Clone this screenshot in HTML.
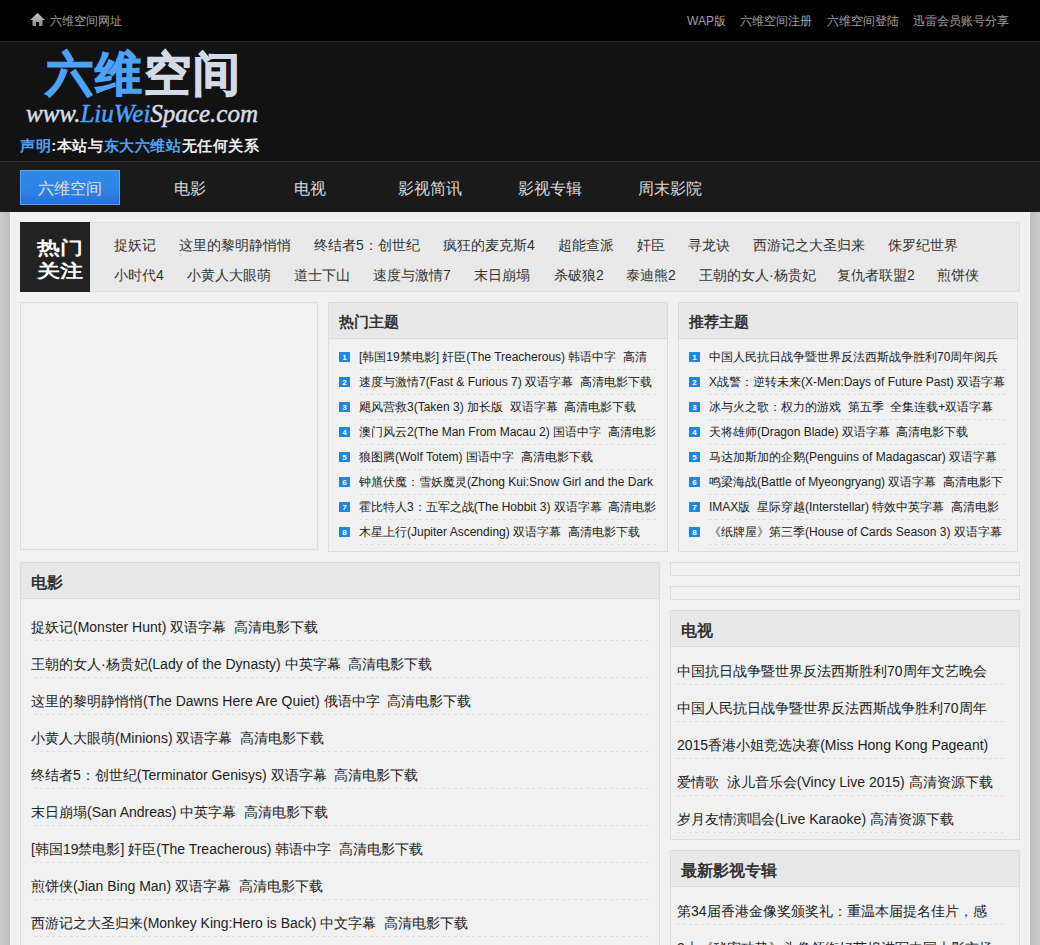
<!DOCTYPE html>
<html><head><meta charset="utf-8">
<style>
*{margin:0;padding:0;box-sizing:border-box}
html,body{width:1040px;height:945px;overflow:hidden}
body{background:linear-gradient(90deg,#cdcdcd 0,#bdbdbd 10px,#bdbdbd 1030px,#cdcdcd 1040px);font-family:"Liberation Sans",sans-serif;color:#333;position:relative}
.abs{position:absolute}
#top{left:0;top:0;width:1040px;height:42px;background:#000;border-bottom:1px solid #2a2a2a}
#top .home{left:30px;top:13px;width:15px;height:14px}
#top .t{font-size:12px;color:#a0a0a0;top:14px;line-height:14px;white-space:nowrap}
#head{left:0;top:42px;width:1040px;height:120px;background:#121212;border-bottom:1px solid #2c2c2c}
#nav{left:0;top:162px;width:1040px;height:50px;background:#1a1a1a}
#nav .it{top:8px;width:100px;height:35px;line-height:37px;text-align:center;font-size:16px;color:#dcdcdc}
#nav .on{background:linear-gradient(#2f88e8,#2d84e6 55%,#2870da);border:1px solid #55a8f8;color:#e0e0e0;line-height:35px}
#main{left:10px;top:212px;width:1020px;height:733px;background:#f1f1f1;border-left:1px solid #f5f5f5;border-right:1px solid #f5f5f5}
#hot{left:20px;top:222px;width:1000px;height:70px;background:#e9e9e9;border:1px solid #dfdfdf}
#hotlbl{left:20px;top:222px;width:70px;height:70px;background:#222}
.hl{color:#fff;font-weight:bold;font-size:20px;line-height:22px;white-space:nowrap;transform:scale(1.13,0.88);transform-origin:0 0}
.tag{font-size:14px;color:#333;white-space:nowrap;line-height:16px}
.pnl{border:1px solid #dcdcdc;background:#f1f1f1}
.ph{position:absolute;left:0;top:0;right:0;height:36px;background:#e8e8e8;border-bottom:1px solid #dcdcdc;font-weight:bold;color:#333}
.ph span{position:absolute;white-space:nowrap}
.sl{position:absolute;overflow:hidden;white-space:nowrap;font-size:12px;color:#222;height:25px;line-height:24px;
 background:repeating-linear-gradient(90deg,#ddd 0 3px,transparent 3px 6px) left bottom/100% 1px no-repeat}
.num{position:absolute;width:11px;height:10px;background:#1d88e2;color:#fff;font-size:8px;font-weight:bold;line-height:12px;text-align:center;overflow:hidden}
.bl{position:absolute;overflow:hidden;white-space:nowrap;font-size:14px;color:#222;height:37px;line-height:46px;
 background:repeating-linear-gradient(90deg,#ddd 0 3px,transparent 3px 6px) left bottom/100% 1px no-repeat}
.logo{font-family:"Liberation Serif",serif;white-space:nowrap}
</style></head><body>
<div id="top" class="abs">
<svg class="abs home" viewBox="0 0 15 14"><defs><linearGradient id="hg" x1="0" y1="0" x2="0" y2="1"><stop offset="0" stop-color="#c8c8c8"/><stop offset="1" stop-color="#8a8a8a"/></linearGradient></defs><path d="M7.5 0 L15 7 L12.5 7 L12.5 13 L9 13 L9 9 L6 9 L6 13 L2.5 13 L2.5 7 L0 7 Z" fill="url(#hg)"/></svg>
<div class="abs t" style="left:50px">六维空间网址</div>
<div class="abs t" style="left:687px">WAP版</div>
<div class="abs t" style="left:740px">六维空间注册</div>
<div class="abs t" style="left:827px">六维空间登陆</div>
<div class="abs t" style="left:913px">迅雷会员账号分享</div>
</div>
<div id="head" class="abs"></div>
<div id="nav" class="abs">
<div class="abs it on" style="left:20px">六维空间</div>
<div class="abs it" style="left:140px">电影</div>
<div class="abs it" style="left:260px">电视</div>
<div class="abs it" style="left:380px">影视简讯</div>
<div class="abs it" style="left:500px">影视专辑</div>
<div class="abs it" style="left:620px">周末影院</div>
</div>
<div class="abs logo" style="left:46px;top:46px;font-weight:bold;font-size:47px;letter-spacing:2px;line-height:56px;-webkit-text-stroke:1.2px currentColor"><span style="color:#4ca2fb">六维</span><span style="color:#d3dbe8">空间</span></div>
<div class="abs logo" style="left:26px;top:101px;font-style:italic;font-size:25px;line-height:26px;color:#d8dde6;-webkit-text-stroke:0.5px currentColor">www.<span style="color:#4ca2fb">LiuWei</span>Space.com</div>
<div class="abs" style="left:20px;top:137px;font-weight:bold;font-size:15px;letter-spacing:0.6px;line-height:18px;color:#eee;white-space:nowrap"><span style="color:#4ca2fb">声明</span>:本站与<span style="color:#4ca2fb">东大六维站</span>无任何关系</div>
<div id="main" class="abs"></div>
<div id="hot" class="abs"></div>
<div id="hotlbl" class="abs"></div>
<div class="abs hl" style="left:37px;top:238px">热门</div>
<div class="abs hl" style="left:37px;top:261px">关注</div>
<div class="abs tag" style="left:114px;top:237px">捉妖记</div>
<div class="abs tag" style="left:179px;top:237px">这里的黎明静悄悄</div>
<div class="abs tag" style="left:314px;top:237px">终结者5：创世纪</div>
<div class="abs tag" style="left:443px;top:237px">疯狂的麦克斯4</div>
<div class="abs tag" style="left:558px;top:237px">超能查派</div>
<div class="abs tag" style="left:637px;top:237px">奸臣</div>
<div class="abs tag" style="left:688px;top:237px">寻龙诀</div>
<div class="abs tag" style="left:753px;top:237px">西游记之大圣归来</div>
<div class="abs tag" style="left:888px;top:237px">侏罗纪世界</div>
<div class="abs tag" style="left:114px;top:267px">小时代4</div>
<div class="abs tag" style="left:187px;top:267px">小黄人大眼萌</div>
<div class="abs tag" style="left:294px;top:267px">道士下山</div>
<div class="abs tag" style="left:373px;top:267px">速度与激情7</div>
<div class="abs tag" style="left:474px;top:267px">末日崩塌</div>
<div class="abs tag" style="left:554px;top:267px">杀破狼2</div>
<div class="abs tag" style="left:626px;top:267px">泰迪熊2</div>
<div class="abs tag" style="left:699px;top:267px">王朝的女人·杨贵妃</div>
<div class="abs tag" style="left:837px;top:267px">复仇者联盟2</div>
<div class="abs tag" style="left:937px;top:267px">煎饼侠</div>
<div class="abs pnl" style="left:20px;top:302px;width:298px;height:248px"></div>
<div class="abs pnl" style="left:328px;top:302px;width:340px;height:250px"><div class="ph" style="font-size:15px"><span style="left:10px;top:10px;line-height:17px">热门主题</span></div></div>
<div class="num" style="left:339px;top:352px">1</div>
<div class="sl" style="left:359px;top:345px;width:298px">[韩国19禁电影] 奸臣(The Treacherous) 韩语中字&nbsp; 高清</div>
<div class="num" style="left:339px;top:377px">2</div>
<div class="sl" style="left:359px;top:370px;width:298px">速度与激情7(Fast &amp; Furious 7) 双语字幕&nbsp; 高清电影下载</div>
<div class="num" style="left:339px;top:402px">3</div>
<div class="sl" style="left:359px;top:395px;width:298px">飓风营救3(Taken 3) 加长版&nbsp; 双语字幕&nbsp; 高清电影下载</div>
<div class="num" style="left:339px;top:427px">4</div>
<div class="sl" style="left:359px;top:420px;width:298px">澳门风云2(The Man From Macau 2) 国语中字&nbsp; 高清电影</div>
<div class="num" style="left:339px;top:452px">5</div>
<div class="sl" style="left:359px;top:445px;width:298px">狼图腾(Wolf Totem) 国语中字&nbsp; 高清电影下载</div>
<div class="num" style="left:339px;top:477px">6</div>
<div class="sl" style="left:359px;top:470px;width:298px">钟馗伏魔：雪妖魔灵(Zhong Kui:Snow Girl and the Dark</div>
<div class="num" style="left:339px;top:502px">7</div>
<div class="sl" style="left:359px;top:495px;width:298px">霍比特人3：五军之战(The Hobbit 3) 双语字幕&nbsp; 高清电影</div>
<div class="num" style="left:339px;top:527px">8</div>
<div class="sl" style="left:359px;top:520px;width:298px">木星上行(Jupiter Ascending) 双语字幕&nbsp; 高清电影下载</div>
<div class="abs pnl" style="left:678px;top:302px;width:340px;height:250px"><div class="ph" style="font-size:15px"><span style="left:10px;top:10px;line-height:17px">推荐主题</span></div></div>
<div class="num" style="left:689px;top:352px">1</div>
<div class="sl" style="left:709px;top:345px;width:298px">中国人民抗日战争暨世界反法西斯战争胜利70周年阅兵</div>
<div class="num" style="left:689px;top:377px">2</div>
<div class="sl" style="left:709px;top:370px;width:298px">X战警：逆转未来(X-Men:Days of Future Past) 双语字幕</div>
<div class="num" style="left:689px;top:402px">3</div>
<div class="sl" style="left:709px;top:395px;width:298px">冰与火之歌：权力的游戏&nbsp; 第五季&nbsp; 全集连载+双语字幕</div>
<div class="num" style="left:689px;top:427px">4</div>
<div class="sl" style="left:709px;top:420px;width:298px">天将雄师(Dragon Blade) 双语字幕&nbsp; 高清电影下载</div>
<div class="num" style="left:689px;top:452px">5</div>
<div class="sl" style="left:709px;top:445px;width:298px">马达加斯加的企鹅(Penguins of Madagascar) 双语字幕</div>
<div class="num" style="left:689px;top:477px">6</div>
<div class="sl" style="left:709px;top:470px;width:298px">鸣梁海战(Battle of Myeongryang) 双语字幕&nbsp; 高清电影下</div>
<div class="num" style="left:689px;top:502px">7</div>
<div class="sl" style="left:709px;top:495px;width:298px">IMAX版&nbsp; 星际穿越(Interstellar) 特效中英字幕&nbsp; 高清电影</div>
<div class="num" style="left:689px;top:527px">8</div>
<div class="sl" style="left:709px;top:520px;width:298px">《纸牌屋》第三季(House of Cards Season 3) 双语字幕</div>
<div class="abs pnl" style="left:20px;top:562px;width:640px;height:500px"><div class="ph" style="font-size:16px"><span style="left:10px;top:11px;line-height:18px">电影</span></div></div>
<div class="bl" style="left:31px;top:604px;width:619px;background-position:3px bottom;background-size:615px 1px">捉妖记(Monster Hunt) 双语字幕&nbsp; 高清电影下载</div>
<div class="bl" style="left:31px;top:641px;width:619px;background-position:3px bottom;background-size:615px 1px">王朝的女人·杨贵妃(Lady of the Dynasty) 中英字幕&nbsp; 高清电影下载</div>
<div class="bl" style="left:31px;top:678px;width:619px;background-position:3px bottom;background-size:615px 1px">这里的黎明静悄悄(The Dawns Here Are Quiet) 俄语中字&nbsp; 高清电影下载</div>
<div class="bl" style="left:31px;top:715px;width:619px;background-position:3px bottom;background-size:615px 1px">小黄人大眼萌(Minions) 双语字幕&nbsp; 高清电影下载</div>
<div class="bl" style="left:31px;top:752px;width:619px;background-position:3px bottom;background-size:615px 1px">终结者5：创世纪(Terminator Genisys) 双语字幕&nbsp; 高清电影下载</div>
<div class="bl" style="left:31px;top:789px;width:619px;background-position:3px bottom;background-size:615px 1px">末日崩塌(San Andreas) 中英字幕&nbsp; 高清电影下载</div>
<div class="bl" style="left:31px;top:826px;width:619px;background-position:3px bottom;background-size:615px 1px">[韩国19禁电影] 奸臣(The Treacherous) 韩语中字&nbsp; 高清电影下载</div>
<div class="bl" style="left:31px;top:863px;width:619px;background-position:3px bottom;background-size:615px 1px">煎饼侠(Jian Bing Man) 双语字幕&nbsp; 高清电影下载</div>
<div class="bl" style="left:31px;top:900px;width:619px;background-position:3px bottom;background-size:615px 1px">西游记之大圣归来(Monkey King:Hero is Back) 中文字幕&nbsp; 高清电影下载</div>
<div class="bl" style="left:31px;top:937px;width:619px;background-position:3px bottom;background-size:615px 1px">速度与激情7(Fast &amp; Furious 7) 双语字幕&nbsp; 高清电影下载</div>
<div class="abs pnl" style="left:670px;top:562px;width:350px;height:14px"></div>
<div class="abs pnl" style="left:670px;top:586px;width:350px;height:14px"></div>
<div class="abs pnl" style="left:670px;top:610px;width:350px;height:230px"><div class="ph" style="font-size:16px"><span style="left:10px;top:11px;line-height:18px">电视</span></div></div>
<div class="bl" style="left:677px;top:648px;width:328px">中国抗日战争暨世界反法西斯胜利70周年文艺晚会</div>
<div class="bl" style="left:677px;top:685px;width:328px">中国人民抗日战争暨世界反法西斯战争胜利70周年</div>
<div class="bl" style="left:677px;top:722px;width:328px">2015香港小姐竞选决赛(Miss Hong Kong Pageant)</div>
<div class="bl" style="left:677px;top:759px;width:328px">爱情歌&nbsp; 泳儿音乐会(Vincy Live 2015) 高清资源下载</div>
<div class="bl" style="left:677px;top:796px;width:328px">岁月友情演唱会(Live Karaoke) 高清资源下载</div>
<div class="abs pnl" style="left:670px;top:850px;width:350px;height:200px"><div class="ph" style="font-size:16px"><span style="left:10px;top:11px;line-height:18px">最新影视专辑</span></div></div>
<div class="bl" style="left:677px;top:888px;width:328px">第34届香港金像奖颁奖礼：重温本届提名佳片，感</div>
<div class="bl" style="left:677px;top:925px;width:328px">3大《秘密功势》头像领衔好莱坞进军中国大影市场</div>
</body></html>
